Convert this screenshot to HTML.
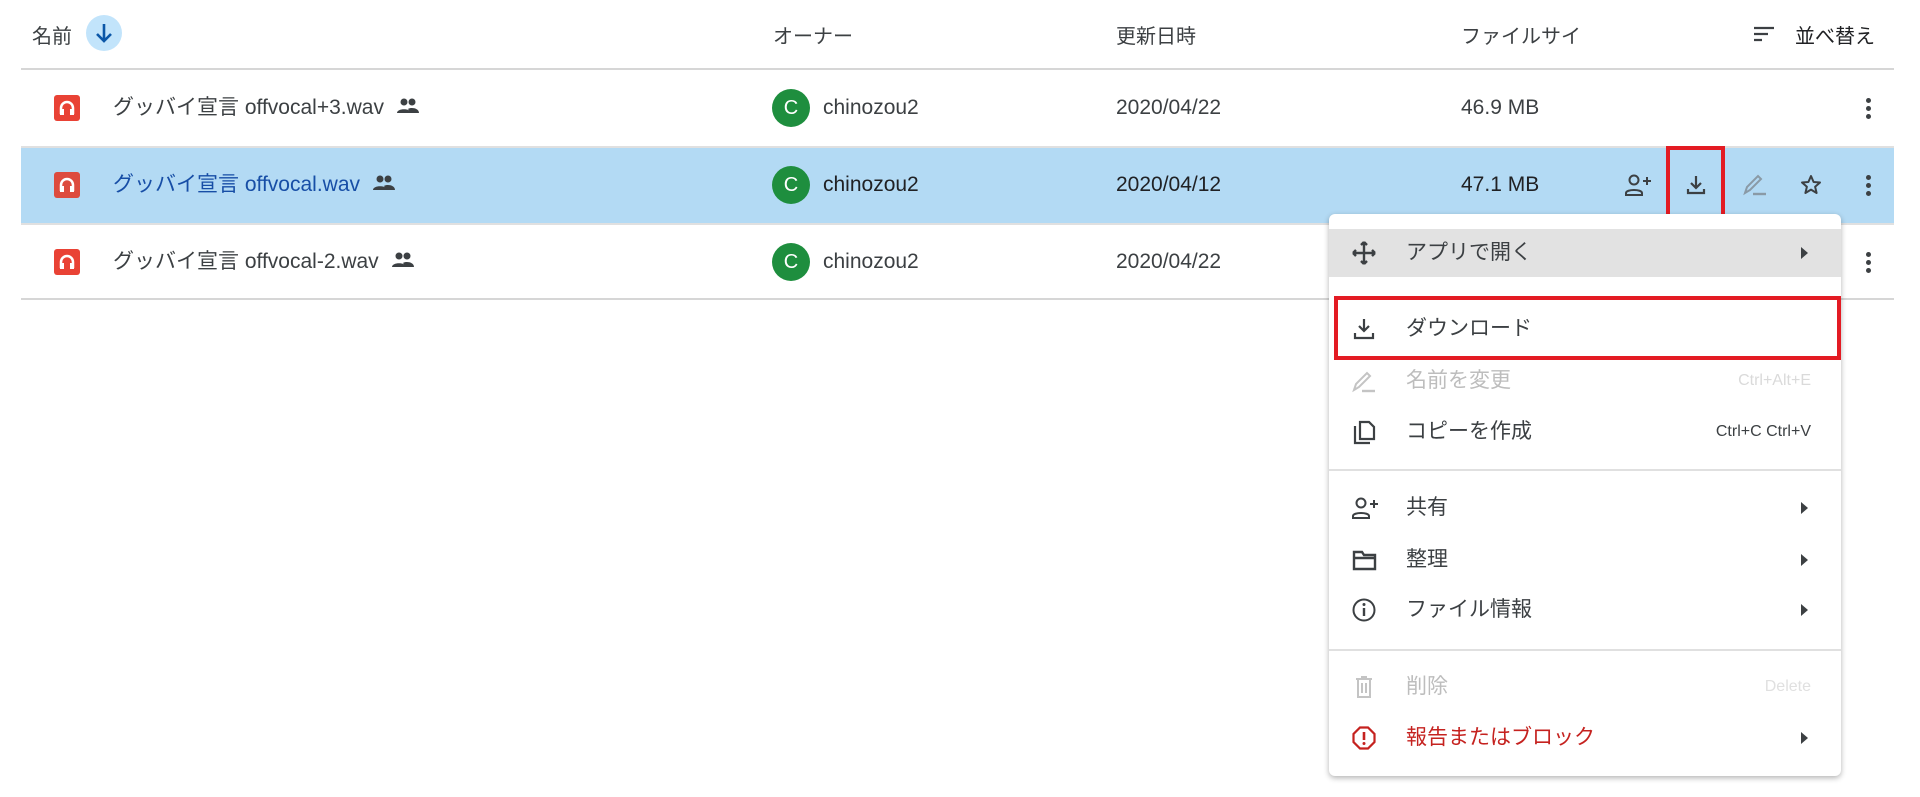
<!DOCTYPE html>
<html><head><meta charset="utf-8"><style>
*{margin:0;padding:0;box-sizing:border-box}
body{width:1920px;height:797px;background:#fff;position:relative;overflow:hidden;font-family:"Liberation Sans","Noto Sans CJK JP",sans-serif;color:#3c4043}
.a{position:absolute;white-space:nowrap}
.h{font-size:20px;color:#3c4043;top:20px}
.line{position:absolute;left:21px;width:1873px;height:2px;background:#d6d6d6}
.row{font-size:21px;line-height:26px}
.row svg{vertical-align:-1px;margin-left:12px}
.fi{position:absolute;left:54px;width:26px;height:26px;background:#e94235;border-radius:3px}
.fi svg{position:absolute;left:4px;top:4px}
.av{position:absolute;left:772px;width:38px;height:38px;border-radius:50%;background:#1e8e3e;color:#fff;font-size:20px;text-align:center;line-height:38px}
.dots{position:absolute;left:1866px;width:5px}
.dots i{display:block;width:5px;height:5px;border-radius:50%;background:#3c4043;margin-bottom:3px}
.menu{position:absolute;left:1329px;top:214px;width:512px;height:562px;background:#fff;border-radius:6px;box-shadow:0 2px 6px rgba(0,0,0,.3)}
.mi{position:absolute;left:0;width:512px;height:48px;font-size:21px;line-height:48px}
.mi .t{position:absolute;left:77px}
.mi .ic{position:absolute;left:22px;top:11px}
.mi .ar{position:absolute;left:472px;top:18px;width:0;height:0;border-left:7px solid #3c4043;border-top:6px solid transparent;border-bottom:6px solid transparent}
.mi .sc{position:absolute;right:30px;font-size:16px}
.sep{position:absolute;left:0;width:512px;height:2px;background:#e0e0e0}
</style></head><body>
<div class="a h" style="left:32px">名前</div>
<div class="a" style="left:86px;top:15px;width:36px;height:36px;border-radius:50%;background:#c2e4fb"><svg width="36" height="36" viewBox="0 0 36 36"><path d="M18 9v17M11 19l7 7 7-7" stroke="#0b57a8" stroke-width="2.6" fill="none"/></svg></div>
<div class="a h" style="left:773px">オーナー</div>
<div class="a h" style="left:1116px">更新日時</div>
<div class="a h" style="left:1461px">ファイルサイ</div>
<svg class="a" style="left:1752px;top:24px" width="24" height="20"><path d="M2 4h20M2 10h14M2 16h8" stroke="#3c4043" stroke-width="2.2"/></svg>
<div class="a h" style="left:1795px;color:#202124">並べ替え</div>
<div class="line" style="top:68px"></div>
<div class="a" style="left:21px;top:147px;width:1873px;height:76px;background:#b3daf4"></div>
<div class="line" style="top:146px;background:#e0e0e0"></div>
<div class="line" style="top:223px;background:#e0e0e0"></div>
<div class="line" style="top:298px"></div>

<div class="fi" style="top:95px"><svg width="18" height="18" viewBox="0 0 18 18"><path d="M3 15V9a6 6 0 0 1 12 0v6" stroke="#fff" stroke-width="2.5" fill="none"/><rect x="2" y="10" width="4" height="6" fill="#fff"/><rect x="12" y="10" width="4" height="6" fill="#fff"/></svg></div>
<div class="a row" style="left:113px;top:95px">グッバイ宣言 offvocal+3.wav<svg width="24" height="18" viewBox="0 0 24 18"><circle cx="8" cy="5" r="3.5" fill="#3c4043"/><circle cx="16" cy="5" r="3.5" fill="#3c4043"/><path d="M1 16c0-5 14-5 14 0zM12 12c3-2 11-1 11 4h-8z" fill="#3c4043"/></svg></div>
<div class="av" style="top:89px">C</div>
<div class="a row" style="left:823px;top:95px">chinozou2</div>
<div class="a row" style="left:1116px;top:95px">2020/04/22</div>
<div class="a row" style="left:1461px;top:95px">46.9 MB</div>
<div class="dots" style="top:98px"><i></i><i></i><i></i></div>

<div class="fi" style="top:172px;background:#dd4b3e"><svg width="18" height="18" viewBox="0 0 18 18"><path d="M3 15V9a6 6 0 0 1 12 0v6" stroke="#fff" stroke-width="2.5" fill="none"/><rect x="2" y="10" width="4" height="6" fill="#fff"/><rect x="12" y="10" width="4" height="6" fill="#fff"/></svg></div>
<div class="a row" style="left:113px;top:172px;color:#174ea6">グッバイ宣言 offvocal.wav<svg width="24" height="18" viewBox="0 0 24 18"><circle cx="8" cy="5" r="3.5" fill="#3c4043"/><circle cx="16" cy="5" r="3.5" fill="#3c4043"/><path d="M1 16c0-5 14-5 14 0zM12 12c3-2 11-1 11 4h-8z" fill="#3c4043"/></svg></div>
<div class="av" style="top:166px">C</div>
<div class="a row" style="left:823px;top:172px;color:#202124">chinozou2</div>
<div class="a row" style="left:1116px;top:172px;color:#202124">2020/04/12</div>
<div class="a row" style="left:1461px;top:172px;color:#202124">47.1 MB</div>
<svg class="a" style="left:1625px;top:173px" width="28" height="24" viewBox="0 0 28 24"><circle cx="9" cy="7" r="4.5" stroke="#3c4043" stroke-width="2" fill="none"/><path d="M1 22v-2c0-4 16-4 16 0v2z" stroke="#3c4043" stroke-width="2" fill="none"/><path d="M22 4v8M18 8h8" stroke="#3c4043" stroke-width="2"/></svg>
<svg class="a" style="left:1684px;top:173px" width="24" height="24" viewBox="0 0 24 24"><path d="M12 3v11M7 10l5 5 5-5M4 16v4h16v-4" stroke="#3c4043" stroke-width="2.2" fill="none"/></svg>
<svg class="a" style="left:1741px;top:172px" width="26" height="26" viewBox="0 0 26 26"><path d="M4 21l2-6L17 4l3 3L9 18z" stroke="#8a9aa6" stroke-width="2" fill="none"/><path d="M12 22h13" stroke="#8a9aa6" stroke-width="2.4"/></svg>
<svg class="a" style="left:1799px;top:173px" width="24" height="24" viewBox="0 0 24 24"><path d="M12 3l2.6 6 6.4.5-4.9 4.2 1.5 6.3L12 16.6 6.4 20l1.5-6.3L3 9.5 9.4 9z" stroke="#3c4043" stroke-width="2" fill="none" stroke-linejoin="round"/></svg>
<div class="dots" style="top:175px"><i></i><i></i><i></i></div>
<div class="a" style="left:1666px;top:146px;width:59px;height:74px;border:4px solid #e31b23"></div>

<div class="fi" style="top:249px"><svg width="18" height="18" viewBox="0 0 18 18"><path d="M3 15V9a6 6 0 0 1 12 0v6" stroke="#fff" stroke-width="2.5" fill="none"/><rect x="2" y="10" width="4" height="6" fill="#fff"/><rect x="12" y="10" width="4" height="6" fill="#fff"/></svg></div>
<div class="a row" style="left:113px;top:249px">グッバイ宣言 offvocal-2.wav<svg width="24" height="18" viewBox="0 0 24 18"><circle cx="8" cy="5" r="3.5" fill="#3c4043"/><circle cx="16" cy="5" r="3.5" fill="#3c4043"/><path d="M1 16c0-5 14-5 14 0zM12 12c3-2 11-1 11 4h-8z" fill="#3c4043"/></svg></div>
<div class="av" style="top:243px">C</div>
<div class="a row" style="left:823px;top:249px">chinozou2</div>
<div class="a row" style="left:1116px;top:249px">2020/04/22</div>
<div class="dots" style="top:252px"><i></i><i></i><i></i></div>

<div class="menu">
 <div class="mi" style="top:15px;background:#e2e2e2"><svg class="ic" width="26" height="26" viewBox="0 0 26 26"><path d="M13 2v22M2 13h22M13 2l-3 3M13 2l3 3M13 24l-3-3M13 24l3-3M2 13l3-3M2 13l3 3M24 13l-3-3M24 13l-3 3" stroke="#3c4043" stroke-width="2.4" fill="none"/></svg><span class="t">アプリで開く</span><span class="ar"></span></div>
 <div class="mi" style="top:91px"><svg class="ic" width="26" height="26" viewBox="0 0 26 26"><path d="M13 3v12M8 10l5 5 5-5M4 17v5h18v-5" stroke="#3c4043" stroke-width="2.2" fill="none"/></svg><span class="t">ダウンロード</span></div>
 <div class="mi" style="top:143px;color:#bdbdbd"><svg class="ic" width="26" height="26" viewBox="0 0 26 26"><path d="M3 22l2-6L16 5l3 3L8 19z" stroke="#c4c4c4" stroke-width="2" fill="none"/><path d="M11 23h13" stroke="#c4c4c4" stroke-width="2.4"/></svg><span class="t">名前を変更</span><span class="sc" style="color:#dadada">Ctrl+Alt+E</span></div>
 <div class="mi" style="top:194px"><svg class="ic" width="26" height="26" viewBox="0 0 26 26"><path d="M4 7v17h15M9 3h9l5 5v12H9z" stroke="#3c4043" stroke-width="2.2" fill="none"/></svg><span class="t">コピーを作成</span><span class="sc">Ctrl+C Ctrl+V</span></div>
 <div class="sep" style="top:255px"></div>
 <div class="mi" style="top:270px"><svg class="ic" width="28" height="26" viewBox="0 0 28 26"><circle cx="10" cy="8" r="4.5" stroke="#3c4043" stroke-width="2" fill="none"/><path d="M2 23v-2c0-4 16-4 16 0v2z" stroke="#3c4043" stroke-width="2" fill="none"/><path d="M23 5v8M19 9h8" stroke="#3c4043" stroke-width="2"/></svg><span class="t">共有</span><span class="ar"></span></div>
 <div class="mi" style="top:322px"><svg class="ic" width="28" height="26" viewBox="0 0 28 26"><path d="M3 5h8l2 3h11v14H3z M3 11h21" stroke="#3c4043" stroke-width="2.4" fill="none"/></svg><span class="t">整理</span><span class="ar"></span></div>
 <div class="mi" style="top:372px"><svg class="ic" width="26" height="26" viewBox="0 0 26 26"><circle cx="13" cy="13" r="10.5" stroke="#3c4043" stroke-width="2" fill="none"/><path d="M13 11v8" stroke="#3c4043" stroke-width="2.4"/><circle cx="13" cy="7.5" r="1.5" fill="#3c4043"/></svg><span class="t">ファイル情報</span><span class="ar"></span></div>
 <div class="sep" style="top:435px"></div>
 <div class="mi" style="top:449px;color:#bdbdbd"><svg class="ic" width="26" height="26" viewBox="0 0 26 26"><path d="M5 5h16M7 5v18h12V5M11 9v10M15 9v10M10 3h6" stroke="#c4c4c4" stroke-width="2" fill="none"/></svg><span class="t">削除</span><span class="sc" style="color:#e0e0e0">Delete</span></div>
 <div class="mi" style="top:500px;color:#c5221f"><svg class="ic" width="26" height="26" viewBox="0 0 26 26"><path d="M9 2.5h8l6.5 6.5v8L17 23.5H9L2.5 17V9z" stroke="#c5221f" stroke-width="2.2" fill="none"/><path d="M13 7v8" stroke="#c5221f" stroke-width="2.6"/><circle cx="13" cy="18.5" r="1.5" fill="#c5221f"/></svg><span class="t">報告またはブロック</span><span class="ar"></span></div>
</div>
<div class="a" style="left:1334px;top:296px;width:507px;height:64px;border:4px solid #e31b23"></div>
</body></html>
